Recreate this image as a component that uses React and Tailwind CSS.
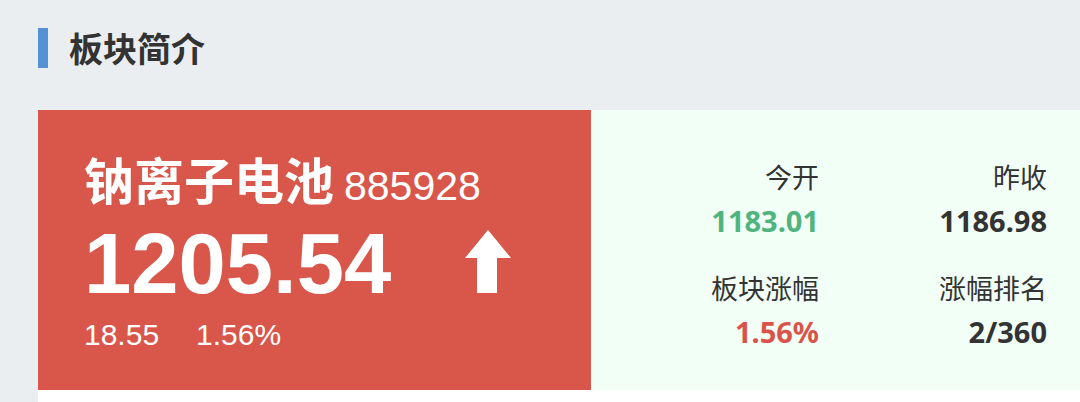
import React from 'react';

const stats = [
    { label: '今开', value: '1183.01', color: 'text-[#50b47f]' },
    { label: '昨收', value: '1186.98', color: 'text-[#333333]' },
    { label: '板块涨幅', value: '1.56%', color: 'text-[#d9534a]' },
    { label: '涨幅排名', value: '2/360', color: 'text-[#333333]' },
];

const UpArrow = () => (
    <svg width="46" height="64" viewBox="0 0 46 64" className="shrink-0">
        <path d="M23 0 L46 28 L32 28 L32 63 L12 63 L12 28 L0 28 Z" fill="#ffffff" />
    </svg>
);

const App = () => {
    return (
        <div className="h-[402px] overflow-hidden bg-[#eaeef0] font-['Noto_Sans','Noto_Sans_CJK_SC',sans-serif]">
            {/* Section title */}
            <div className="flex items-center h-[110px] pl-[38px] pb-[14px]">
                <div className="w-[10px] h-[40px] bg-[#5592d3]" />
                <h2 className="ml-[21px] text-[34px] leading-[40px] font-bold text-[#333333] font-['Noto_Sans_CJK_SC',sans-serif]">
                    板块简介
                </h2>
            </div>

            {/* Card */}
            <div className="ml-[38px] bg-white h-[320px]">
                <div className="flex h-[280px]">
                    {/* Left: quote */}
                    <div className="w-[553px] bg-[#d8564a] text-white pl-[46px] pt-[38px] font-['Liberation_Sans','Noto_Sans_CJK_SC',sans-serif]">
                        <div className="flex items-baseline h-[60px]">
                            <span className="text-[50px] leading-[60px] font-bold font-['Noto_Sans_CJK_SC',sans-serif]">钠离子电池</span>
                            <span className="ml-[10px] text-[41px] leading-[60px]">885928</span>
                        </div>
                        <div className="flex items-end mt-[15px] h-[82px]">
                            <span className="text-[85px] leading-[82px] font-bold">1205.54</span>
                            <div className="ml-[74px] mb-[11px]">
                                <UpArrow />
                            </div>
                        </div>
                        <div className="flex items-baseline gap-[37px] mt-[12px] text-[30px] leading-[36px]">
                            <span>18.55</span>
                            <span>1.56%</span>
                        </div>
                    </div>

                    {/* Right: stats */}
                    <div className="flex-1 bg-[#f2fff6] pt-[49px]">
                        <div className="grid grid-cols-[228px_228px] gap-y-[29px]">
                            {stats.map((s) => (
                                <div key={s.label} className="flex flex-col items-end">
                                    <span className="text-[27px] leading-[36px] text-[#333333] font-['Noto_Sans_CJK_SC',sans-serif]">
                                        {s.label}
                                    </span>
                                    <span className={`mt-[6px] text-[29px] leading-[40px] font-bold ${s.color}`}>
                                        {s.value}
                                    </span>
                                </div>
                            ))}
                        </div>
                    </div>
                </div>
            </div>
        </div>
    );
};

export default App;
